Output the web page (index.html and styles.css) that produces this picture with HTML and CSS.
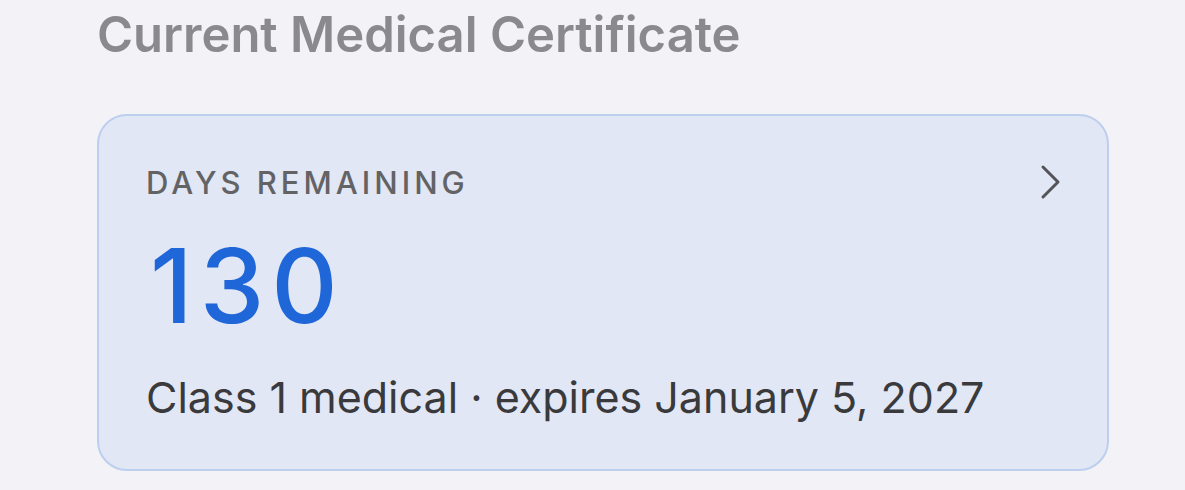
FILE: index.html
```html
<!DOCTYPE html>
<html>
<head>
    <title>Medical Certificate</title>
    <link rel="stylesheet" href="styles.css">
</head>
<body>
    <div class="section">
        <h2 class="section-title">Current Medical Certificate</h2>
        <div class="card">
            <div class="card-head">
                <span class="label">DAYS REMAINING</span>
                <svg class="chevron" width="21" height="36" viewBox="0 0 21 36">
                    <path d="M3 3 L18 18 L3 33" fill="none" stroke="#545458" stroke-width="3" stroke-linecap="round" stroke-linejoin="round"/>
                </svg>
            </div>
            <div class="days">130</div>
            <div class="detail">Class 1 medical · expires January 5, 2027</div>
        </div>
    </div>
</body>
</html>
```

FILE: styles.css
```css
body {
    margin: 0;
    background: #f2f2f7;
    font-family: Inter, "Noto Sans", sans-serif;
}

.section {
    padding: 7px 0 0 97px;
    width: 1012px;
}

.section-title {
    margin: 0 0 51px 0;
    font-size: 49px;
    font-weight: 600;
    color: #8a8a8e;
    line-height: 56px;
}

.card {
    box-sizing: border-box;
    height: 357px;
    background: #e2e7f5;
    border: 2px solid #bccfee;
    border-radius: 30px;
    padding: 49px 46px 0 47px;
}

.card-head {
    display: flex;
    justify-content: space-between;
    align-items: center;
    height: 34px;
}

.label {
    font-size: 31px;
    font-weight: 500;
    letter-spacing: 4px;
    color: #636366;
}

.chevron {
    display: block;
}

.days {
    margin-top: 32px;
    padding-left: 4px;
    font-size: 103px;
    font-weight: 500;
    line-height: 110px;
    color: #1f66d9;
    letter-spacing: 7px;
}

.detail {
    margin-top: 30px;
    font-size: 43px;
    color: #3a3a3c;
    line-height: 52px;
}
```
